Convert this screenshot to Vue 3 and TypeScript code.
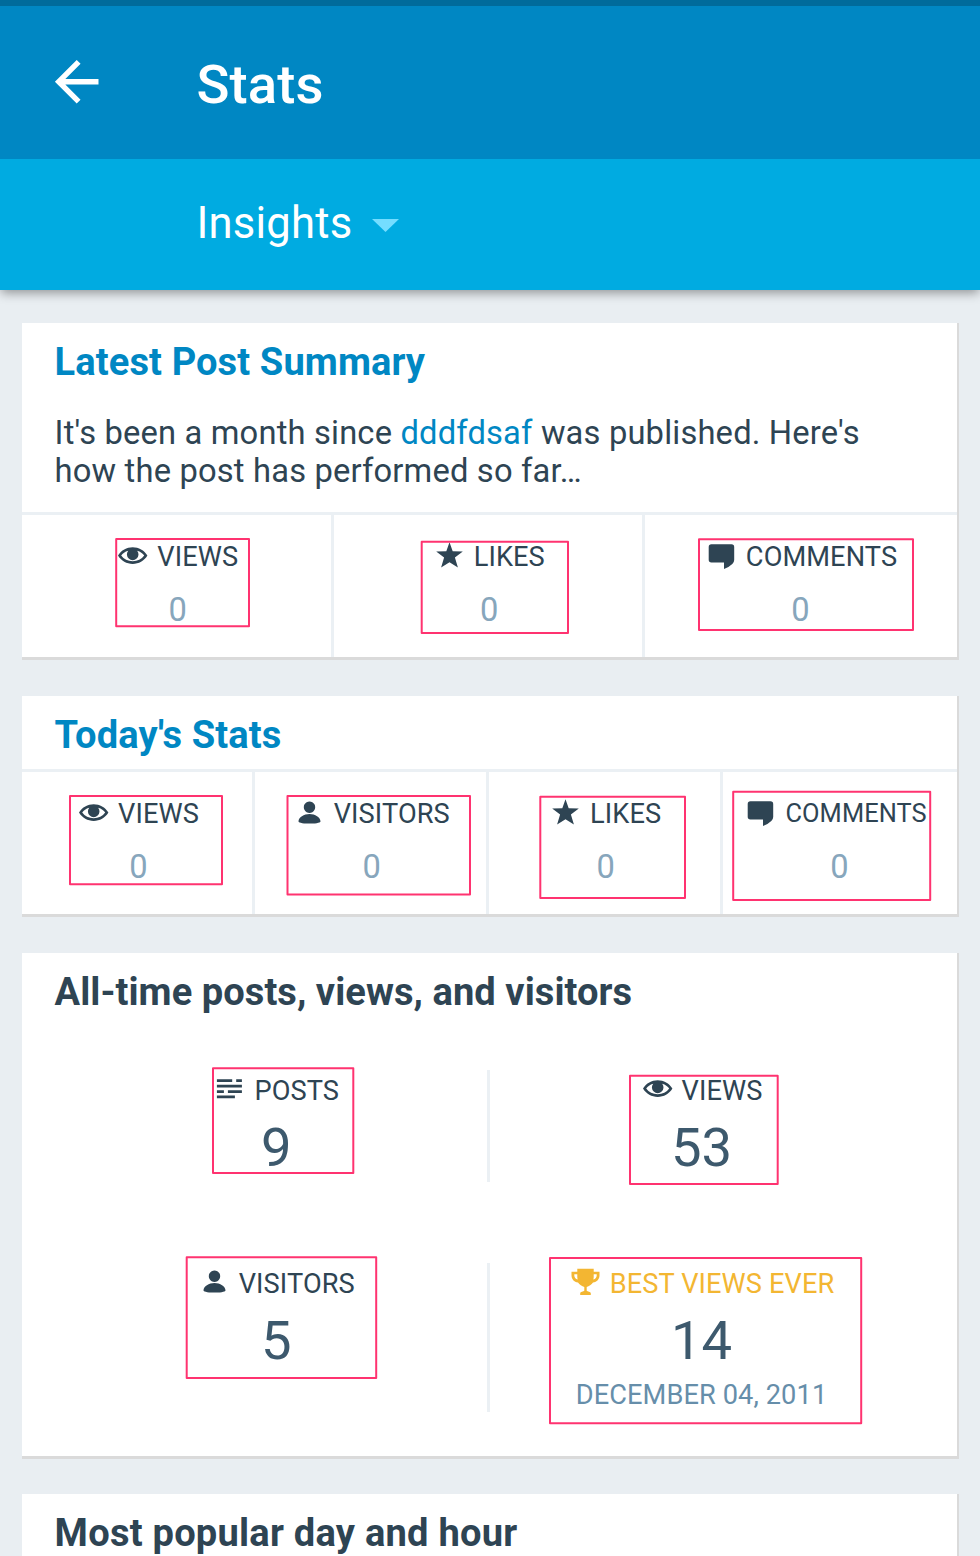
<script setup lang="ts">
interface Metric {
  icon: string
  label: string
  value: string
  compact?: boolean
  gold?: boolean
  date?: string
}

interface Frame {
  x1: number
  y1: number
  x2: number
  y2: number
}

// Glyph outlines on a 33 x 33 grid
const icons: Record<string, string> = {
  eye: 'M2 16.600C5.200 11.200 10.700 8.200 16.700 8.200S28.200 11.200 31.400 16.600C28.200 22 22.700 25 16.700 25S5.200 22 2 16.600ZM5.200 16.600C7.800 20.300 11.900 22.300 16.700 22.300S25.600 20.300 28.200 16.600C26.700 14.400 24.400 12.500 21.200 11.700A5.800 5.800 0 1 1 12.200 11.700C9 12.500 6.700 14.400 5.200 16.600Z',
  star: 'M16.500 3.300L19.700 12.200L29.800 12.400L21.900 18.600L24.900 28.600L16.500 23.200L8.100 28.600L11.100 18.600L3.200 12.400L13.300 12.200Z',
  comment: 'M6.400 5.200H26.500A2.700 2.700 0 0 1 29.200 7.900V20.900Q29.200 23.200 27.300 24.900Q24.500 27.700 19 30V23.500H6.400A2.700 2.700 0 0 1 3.700 20.800V7.900A2.700 2.700 0 0 1 6.400 5.200Z',
  person: 'M16.500 5.500A5.700 5.700 0 1 1 16.490 5.500ZM5.500 25.400C5.500 21.500 11 18 16.500 18S27.500 21.500 27.500 25.400C27.500 26.900 21 27.600 16.500 27.600S5.500 26.900 5.500 25.400Z',
  posts: 'M3.900 7.300H19.200V10H3.900ZM23.200 7.300H28.900V10H23.200ZM3.900 12.700H28.900V15.400H3.900ZM3.900 18.200H10.900V20.900H3.900ZM14.900 18.200H28.900V20.900H14.900ZM3.900 23.500H21.900V26.200H3.900Z',
  trophy: 'M8.300 3.800H24.700V6.800H30.500V10.500C30.500 14 28 17 24 17.500C22.600 19.600 20 21.400 17.700 22V25.800C18.500 26.800 21.800 26.400 21.800 28.300V30.100H11.200V28.300C11.200 26.400 14.500 26.800 15.300 25.800V22C13 21.400 10.400 19.600 9 17.500C5 17 2.500 14 2.500 10.500V6.800H8.300ZM8.300 9.200H5.300V10.500C5.300 12.400 6.500 13.900 8.700 14.500Q8.300 13.300 8.300 12ZM24.700 9.200V12Q24.700 13.300 24.300 14.500C26.500 13.900 27.700 12.400 27.700 10.500V9.200Z',
}

const latest: Metric[] = [
  { icon: 'eye', label: 'VIEWS', value: '0' },
  { icon: 'star', label: 'LIKES', value: '0' },
  { icon: 'comment', label: 'COMMENTS', value: '0' },
]

const today: Metric[] = [
  { icon: 'eye', label: 'VIEWS', value: '0' },
  { icon: 'person', label: 'VISITORS', value: '0' },
  { icon: 'star', label: 'LIKES', value: '0' },
  { icon: 'comment', label: 'COMMENTS', value: '0', compact: true },
]

const allTime: Metric[] = [
  { icon: 'posts', label: 'POSTS', value: '9' },
  { icon: 'eye', label: 'VIEWS', value: '53' },
  { icon: 'person', label: 'VISITORS', value: '5' },
  { icon: 'trophy', label: 'BEST VIEWS EVER', value: '14', gold: true, date: 'DECEMBER 04, 2011' },
]

// Highlight frames laid over the metrics
const frames: Frame[] = [
  { x1: 116.200, y1: 539, x2: 249, y2: 626.200 },
  { x1: 421.700, y1: 541.700, x2: 568, y2: 633 },
  { x1: 699, y1: 539.300, x2: 913, y2: 630 },
  { x1: 70, y1: 796, x2: 222, y2: 884.300 },
  { x1: 287.500, y1: 796, x2: 470, y2: 894.500 },
  { x1: 540.300, y1: 796.700, x2: 685, y2: 898 },
  { x1: 733.200, y1: 791.700, x2: 930.200, y2: 900 },
  { x1: 213, y1: 1068.300, x2: 353.300, y2: 1173 },
  { x1: 630, y1: 1075.700, x2: 777.700, y2: 1184 },
  { x1: 186.700, y1: 1257.300, x2: 376.200, y2: 1378 },
  { x1: 550, y1: 1258, x2: 861.200, y2: 1423.300 },
]
</script>

<template>
  <div class="screen">
    <header class="header">
      <div class="toolbar">
        <svg class="back" viewBox="0 0 24 24">
          <path d="M20 11H7.830l5.590-5.590L12 4l-8 8 8 8 1.410-1.410L7.830 13H20v-2z" />
        </svg>
        <h1 class="title">Stats</h1>
      </div>
      <div class="filter">
        <span class="filter-name">Insights</span>
        <svg class="caret" viewBox="0 0 27 13"><path d="M0 0H27L13.500 13Z" /></svg>
      </div>
    </header>

    <main class="cards">
      <section class="card latest">
        <h2 class="heading link">Latest Post Summary</h2>
        <p class="summary">
          It's been a month since <a class="link">dddfdsaf</a> was published. Here's<br />
          how the post has performed so far…
        </p>
        <div class="strip thirds">
          <div v-for="m in latest" :key="m.label" class="cell">
            <div class="label">
              <svg class="icon" viewBox="0 0 33 33"><path fill-rule="evenodd" :d="icons[m.icon]" /></svg>
              <span>{{ m.label }}</span>
            </div>
            <div class="count">{{ m.value }}</div>
          </div>
        </div>
      </section>

      <section class="card today">
        <h2 class="heading link">Today's Stats</h2>
        <div class="strip quarters">
          <div v-for="m in today" :key="m.label" class="cell">
            <div class="label" :class="{ compact: m.compact }">
              <svg class="icon" viewBox="0 0 33 33"><path fill-rule="evenodd" :d="icons[m.icon]" /></svg>
              <span>{{ m.label }}</span>
            </div>
            <div class="count">{{ m.value }}</div>
          </div>
        </div>
      </section>

      <section class="card all-time">
        <h2 class="heading">All-time posts, views, and visitors</h2>
        <div class="grid">
          <div v-for="m in allTime" :key="m.label" class="total">
            <div class="label" :class="{ gold: m.gold }">
              <svg class="icon" viewBox="0 0 33 33"><path fill-rule="evenodd" :d="icons[m.icon]" /></svg>
              <span>{{ m.label }}</span>
            </div>
            <div class="big">{{ m.value }}</div>
            <div v-if="m.date" class="date">{{ m.date }}</div>
          </div>
        </div>
      </section>

      <section class="card popular">
        <h2 class="heading">Most popular day and hour</h2>
      </section>
    </main>

    <svg class="frames" viewBox="0 0 980 1556">
      <rect
        v-for="(f, i) in frames"
        :key="i"
        :x="f.x1"
        :y="f.y1"
        :width="f.x2 - f.x1"
        :height="f.y2 - f.y1"
      />
    </svg>
  </div>
</template>

<style>
body {
  margin: 0;
  background: #e9eef2;
}
</style>

<style scoped>
.screen {
  position: relative;
  width: 980px;
  height: 1556px;
  overflow: hidden;
  background: #e9eef2;
  color: #2e4453;
  font-family: Roboto, "Noto Sans", sans-serif;
}

.header {
  height: 290px;
  box-sizing: border-box;
  border-top: 6px solid #006b9b;
  background: #00abe1;
  box-shadow: 0 4px 10px -1px rgba(0, 0, 0, 0.38);
}

.toolbar {
  display: flex;
  align-items: center;
  height: 152.700px;
  padding-left: 44px;
  background: #0087c3;
}

.back {
  width: 65.400px;
  height: 65.400px;
  margin-top: -0.600px;
  fill: #fff;
}

.title {
  margin: 5.500px 0 0 87px;
  color: #fff;
  font-size: 54.400px;
  font-weight: 500;
  letter-spacing: 0.150px;
  line-height: 64px;
}

.filter {
  display: flex;
  align-items: center;
  height: 131px;
  padding-left: 196.500px;
}

.filter-name {
  color: #fff;
  font-size: 43.600px;
  letter-spacing: 0.200px;
  line-height: 52px;
}

.caret {
  width: 27px;
  height: 13px;
  margin: 3px 0 0 19.500px;
  fill: #74ddff;
}

.cards {
  display: flex;
  flex-direction: column;
  gap: 35.500px;
  padding: 33px 21px 0 22px;
}

.card {
  flex: none;
  box-sizing: border-box;
  padding-top: 16.500px;
  border-right: 2px solid #dadada;
  border-bottom: 3px solid #dadada;
  background: #fff;
}

.latest {
  height: 337px;
}

.today {
  height: 221.500px;
  padding-top: 17.200px;
}

.all-time {
  height: 506px;
  padding-top: 17.500px;
}

.popular {
  height: 300px;
}

.heading {
  margin: 0 0 0 32.600px;
  font-size: 38.100px;
  font-weight: 700;
  letter-spacing: 0.100px;
  line-height: 45px;
  white-space: nowrap;
}

.all-time .heading {
  letter-spacing: 0.050px;
}

.popular .heading {
  letter-spacing: 0.230px;
}

.link {
  color: #0087c3;
}

.summary {
  margin: 29px 0 22px 32.600px;
  font-size: 32.700px;
  letter-spacing: 0.175px;
  line-height: 38.300px;
  white-space: nowrap;
}

.strip {
  display: grid;
  border-top: 3px solid #ebf0f4;
}

.thirds {
  grid-template-columns: 311.500px 311.500px 1fr;
}

.quarters {
  grid-template-columns: 233px 233.500px 234.200px 1fr;
  margin-top: 11.300px;
}

.cell {
  min-width: 0;
  height: 142px;
  box-sizing: border-box;
  padding: 23.500px 0 0 2px;
  border-right: 3px solid #ebf0f4;
}

.today .cell {
  padding-top: 24px;
}

.cell:last-child {
  padding-left: 0;
  border-right: 0;
}

.label {
  display: flex;
  justify-content: center;
  gap: 8px;
  height: 37px;
  font-size: 27.200px;
  letter-spacing: 0.100px;
  line-height: 37px;
  white-space: nowrap;
}

.compact {
  padding-right: 8.500px;
  font-size: 25.400px;
  line-height: 35px;
}

.icon {
  flex: none;
  width: 33px;
  height: 33px;
  fill: currentColor;
}

.count {
  margin: 15.500px 0 0;
  color: #87a6bc;
  font-size: 32.700px;
  line-height: 38px;
  text-align: center;
}

.today .count {
  margin-top: 15px;
}

.cell:not(:last-child) .count {
  margin-left: 1px;
}

.cell:last-child .count {
  margin-right: 1px;
}

.grid {
  display: grid;
  grid-template-columns: 424.500px 423px;
  grid-template-rows: 111.500px 149px;
  row-gap: 81.500px;
  margin: 55px 0 0 43.500px;
}

.total {
  box-sizing: border-box;
  padding-top: 2px;
  text-align: center;
}

.total:nth-child(odd) {
  border-right: 3px solid #ebf0f4;
}

.total .label {
  line-height: 38px;
}

.big {
  margin-top: 6.500px;
  color: #3d596d;
  font-size: 54.400px;
  line-height: 64px;
}

.date {
  margin-top: 4.300px;
  color: #668eaa;
  font-size: 27.200px;
  letter-spacing: 0.100px;
  line-height: 37px;
}

.gold {
  color: #f3b632;
}

.frames {
  position: absolute;
  top: 0;
  left: 0;
  width: 980px;
  height: 1556px;
  fill: none;
  stroke: #ff3370;
  stroke-width: 2px;
  stroke-linejoin: round;
}
</style>
